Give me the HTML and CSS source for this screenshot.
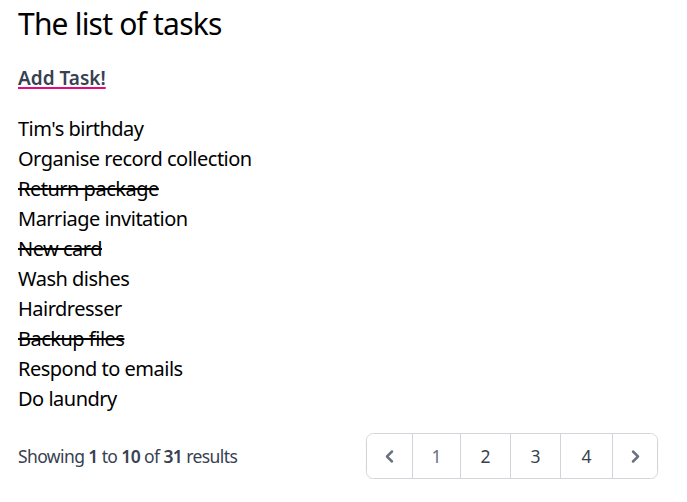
FILE: index.html
```html
<!DOCTYPE html>
<html lang="en">
<head>
<meta charset="utf-8">
<title>Tasks</title>
<link rel="stylesheet" href="styles.css">
</head>
<body>
<main class="page">
  <h1 class="title">The list of tasks</h1>
  <a class="add-link" href="#">Add Task!</a>
  <ul class="tasks">
    <li>Tim's birthday</li>
    <li>Organise record collection</li>
    <li class="done">Return package</li>
    <li>Marriage invitation</li>
    <li class="done">New card</li>
    <li>Wash dishes</li>
    <li>Hairdresser</li>
    <li class="done">Backup files</li>
    <li>Respond to emails</li>
    <li>Do laundry</li>
  </ul>
  <nav class="pager">
    <p class="summary">Showing <b>1</b> to <b>10</b> of <b>31</b> results</p>
    <div class="pages">
      <span class="pg arrow prev">
        <svg viewBox="0 0 20 20" class="chev"><path fill-rule="evenodd" d="M12.707 5.293a1 1 0 010 1.414L9.414 10l3.293 3.293a1 1 0 01-1.414 1.414l-4-4a1 1 0 010-1.414l4-4a1 1 0 011.414 0z"/></svg>
      </span>
      <span class="pg current">1</span>
      <a class="pg" href="#">2</a>
      <a class="pg" href="#">3</a>
      <a class="pg wide" href="#">4</a>
      <a class="pg arrow next" href="#">
        <svg viewBox="0 0 20 20" class="chev"><path fill-rule="evenodd" d="M7.293 14.707a1 1 0 010-1.414L10.586 10 7.293 6.707a1 1 0 011.414-1.414l4 4a1 1 0 010 1.414l-4 4a1 1 0 01-1.414 0z"/></svg>
      </a>
    </div>
  </nav>
</main>
</body>
</html>
```
FILE: styles.css
```css
* { box-sizing: border-box; }
html, body { margin: 0; background: #fff; }
body {
  font-family: "Noto Sans", "Open Sans", sans-serif;
  color: #000;
}
.page {
  padding: 6px 29px 0 18px;
  display: flex;
  flex-direction: column;
  align-items: flex-start;
}
.title {
  margin: 0;
  font-size: 30px;
  line-height: 36px;
  font-weight: 400;
  letter-spacing: -0.8px;
}
.add-link {
  margin-top: 22px;
  font-size: 19px;
  line-height: 28px;
  font-weight: 600;
  color: #374151;
  text-decoration: underline;
  text-decoration-color: #e5087e;
  text-decoration-thickness: 2px;
  text-underline-offset: 2px;
}
.tasks {
  list-style: none;
  margin: 22px 0 0;
  padding: 0;
  font-size: 20px;
  line-height: 30px;
  letter-spacing: -0.5px;
}
.tasks .done { text-decoration: line-through; text-decoration-thickness: 2px; }
.pager {
  align-self: stretch;
  margin-top: 19px;
  display: flex;
  align-items: center;
  justify-content: space-between;
}
.summary {
  margin: 0;
  font-size: 17.5px;
  line-height: 25px;
  color: #374151;
  letter-spacing: -0.6px;
}
.summary b { font-weight: 600; }
.pages {
  display: flex;
  border: 1px solid #d1d5db;
  border-radius: 7.5px;
  box-shadow: 0 1px 2px rgba(0,0,0,0.05);
  overflow: hidden;
}
.pg {
  height: 44px;
  width: 50px;
  display: flex;
  align-items: center;
  justify-content: center;
  font-size: 17.5px;
  color: #374151;
  text-decoration: none;
  background: #fff;
  border-left: 1px solid #d1d5db;
}
.pg:first-child { border-left: 0; }
.pg.current { width: 48px; color: #6b7280; }
.pg.wide { width: 52px; }
.pg.prev { width: 45px; }
.pg.next { width: 45px; }
.pg.arrow { color: #6b7280; }
.chev { width: 25px; height: 25px; fill: currentColor; display: block; }
```
